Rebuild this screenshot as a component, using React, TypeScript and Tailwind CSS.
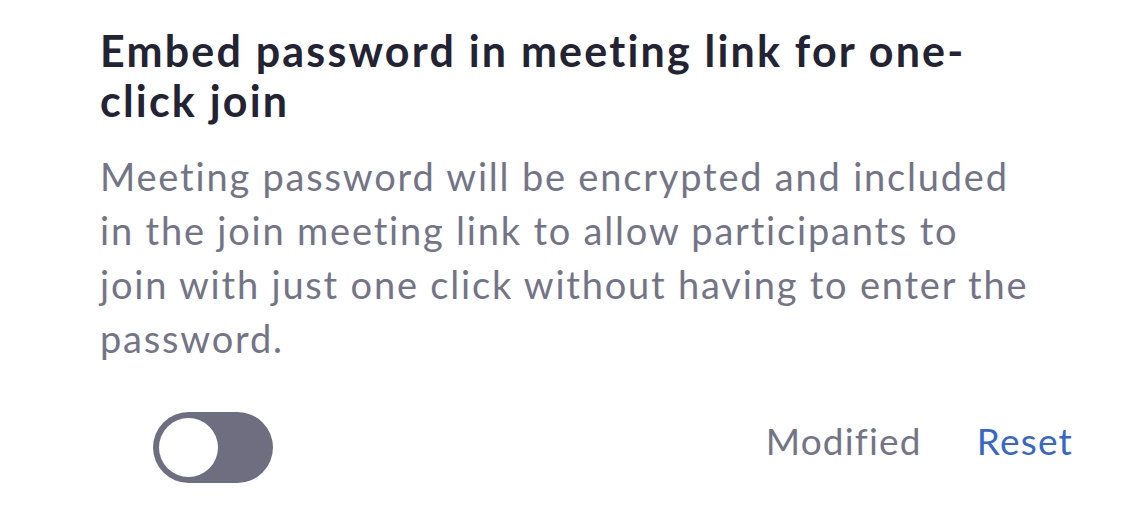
export default function App() {
  return (
    <div
      className="h-[523px] w-[1125px] bg-white pl-[100px] pr-[52px] pt-[26px]"
      style={{ fontFamily: "Lato, 'Open Sans', sans-serif" }}
    >
      <h1 className="text-[43px] font-bold leading-[50px] tracking-[2.2px] text-[#232333]">
        Embed password in meeting link for one-
        <br />
        click join
      </h1>
      <p className="mt-[23px] text-[38px] leading-[54px] tracking-[1.8px] text-[#747487]">
        Meeting password will be encrypted and included
        <br />
        in the join meeting link to allow participants to
        <br />
        join with just one click without having to enter the
        <br />
        password.
      </p>
      <div className="mt-[47px] flex items-center justify-between pl-[53px]">
        <button
          type="button"
          className="flex h-[71px] w-[120px] items-center rounded-full bg-[#6e6e80] px-[6px]"
        >
          <span className="h-[59px] w-[59px] rounded-full bg-white" />
        </button>
        <div className="mb-[14px] flex items-center gap-[55px] text-[37px] tracking-[1.2px]">
          <span className="text-[#747487]">Modified</span>
          <span className="text-[#3767c8]">Reset</span>
        </div>
      </div>
    </div>
  );
}
